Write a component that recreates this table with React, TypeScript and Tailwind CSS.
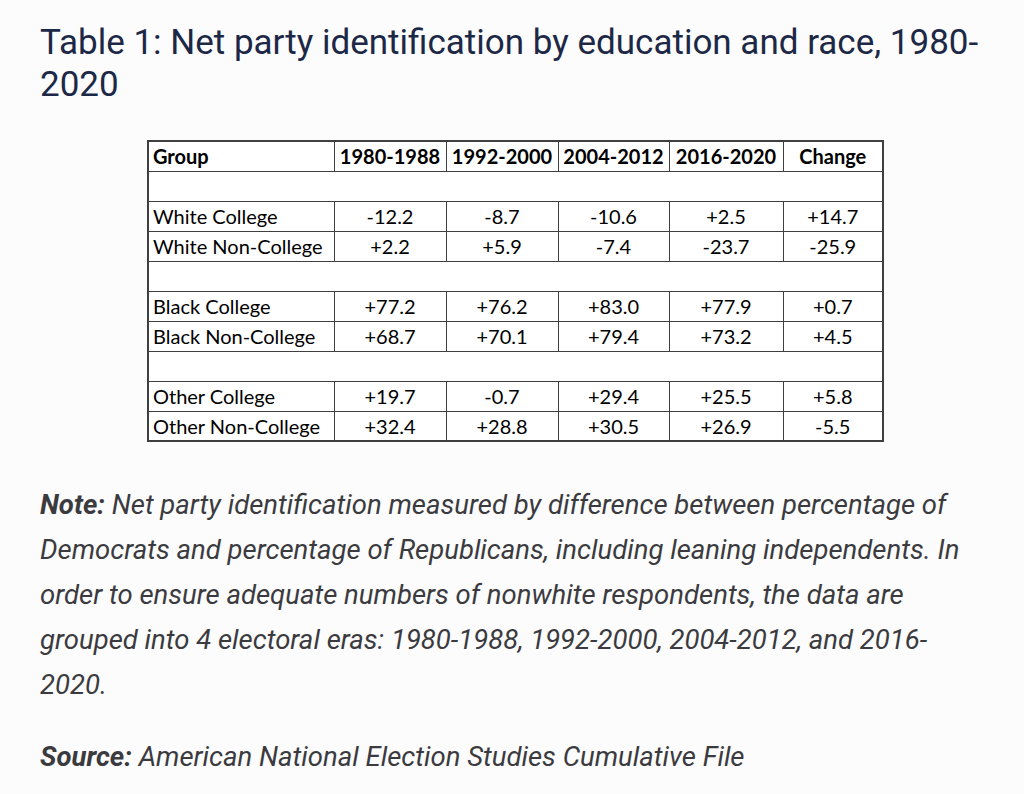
import React from 'react';

type Row = { group: string; values: string[] } | null;

const headers = ['1980-1988', '1992-2000', '2004-2012', '2016-2020', 'Change'];

const rows: Row[] = [
  null,
  { group: 'White College', values: ['-12.2', '-8.7', '-10.6', '+2.5', '+14.7'] },
  { group: 'White Non-College', values: ['+2.2', '+5.9', '-7.4', '-23.7', '-25.9'] },
  null,
  { group: 'Black College', values: ['+77.2', '+76.2', '+83.0', '+77.9', '+0.7'] },
  { group: 'Black Non-College', values: ['+68.7', '+70.1', '+79.4', '+73.2', '+4.5'] },
  null,
  { group: 'Other College', values: ['+19.7', '-0.7', '+29.4', '+25.5', '+5.8'] },
  { group: 'Other Non-College', values: ['+32.4', '+28.8', '+30.5', '+26.9', '-5.5'] },
];

const colWidths = ['w-[186px]', 'w-[112px]', 'w-[112px]', 'w-[111px]', 'w-[114px]', 'w-[100px]'];

export default function App() {
  return (
    <div className="min-h-screen bg-[#fcfcfc] px-10 pt-[22px] font-['Roboto',sans-serif]">
      <h2 className="text-[35px] leading-[42px] text-[#1d2847]">
        Table 1: Net party identification by education and race, 1980-
        <br />
        2020
      </h2>

      <div className="mt-[34px] ml-[107px]">
        <table className="table-fixed border-collapse border-2 border-[#3f3f3f] bg-white font-['Lato',sans-serif] text-[20px] text-black">
          <colgroup>
            {colWidths.map((w, i) => (
              <col key={i} className={w} />
            ))}
          </colgroup>
          <thead>
            <tr className="h-[30px]">
              <th className="border border-[#3f3f3f] px-1 text-left font-bold leading-none">Group</th>
              {headers.map((h) => (
                <th key={h} className="border border-[#3f3f3f] text-center font-bold leading-none">
                  {h}
                </th>
              ))}
            </tr>
          </thead>
          <tbody>
            {rows.map((r, i) =>
              r === null ? (
                <tr key={i} className="h-[30px]">
                  <td colSpan={6} className="border border-[#3f3f3f]" />
                </tr>
              ) : (
                <tr key={i} className="h-[30px]">
                  <td className="border border-[#3f3f3f] px-1 text-left leading-none whitespace-nowrap">
                    {r.group}
                  </td>
                  {r.values.map((v, j) => (
                    <td key={j} className="border border-[#3f3f3f] text-center leading-none">
                      {v}
                    </td>
                  ))}
                </tr>
              ),
            )}
          </tbody>
        </table>
      </div>

      <div className="mt-[40px] text-[27.5px] leading-[45px] text-[#3b3b3f] italic">
        <p className="pr-4">
          <strong className="font-bold">Note:</strong> Net party identification measured by difference between
          percentage of Democrats and percentage of Republicans, including leaning independents. In order to
          ensure adequate numbers of nonwhite respondents, the data are grouped into 4 electoral eras:
          1980-1988, 1992-2000, 2004-2012, and 2016-2020.
        </p>
        <p className="mt-[27px]">
          <strong className="font-bold">Source:</strong> American National Election Studies Cumulative File
        </p>
      </div>
    </div>
  );
}
